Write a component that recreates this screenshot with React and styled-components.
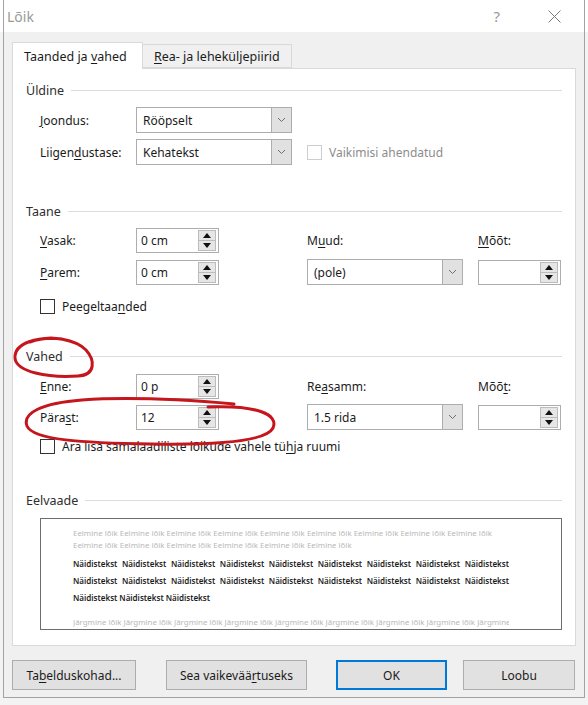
import React from "react";
import styled, { createGlobalStyle } from "styled-components";

const ui = `"Noto Sans", "Open Sans", Arial, sans-serif`;
const ink = "#1b1b1b";
const frame = "#adadad";
const face = "#e1e1e1";
const red = "#c4161c";

const GlobalStyle = createGlobalStyle`
  html, body { margin: 0; padding: 0; }
  body { font-family: ${ui}; background: #f4f4f4; }
  * { box-sizing: border-box; }
`;

const Page = styled.div`
  position: relative;
  width: 588px;
  height: 705px;
  overflow: hidden;
  padding: 0 3px;
  background: linear-gradient(#fff 0 32px, #f3f3f3 32px);
`;

const Dialog = styled.div`
  width: 582px;
  height: 698px;
  background: #f0f0f0;
  border: 1px solid #a3a3a3;
  border-top: none;
  display: flex;
  flex-direction: column;
`;

const TitleBar = styled.div`
  height: 32px;
  background: #fff;
  display: flex;
  align-items: center;
  padding-left: 3px;
`;

const Title = styled.span`
  flex: 1;
  font-size: 14px;
  color: #9a9a9a;
`;

const Help = styled.span`
  font-size: 15px;
  color: #9a9a9a;
  margin-right: 48px;
`;

const CloseIcon = styled.svg`
  width: 13px;
  height: 13px;
  margin-right: 23px;
`;

const Body = styled.div`
  padding: 10px 8px 0 8px;
`;

const TabStrip = styled.div`
  display: flex;
  align-items: flex-end;
  height: 26px;
`;

const Tab = styled.div`
  position: relative;
  z-index: 1;
  width: ${(p) => p.$w}px;
  height: ${(p) => (p.$active ? 27 : 24)}px;
  margin-bottom: ${(p) => (p.$active ? -1 : 0)}px;
  background: ${(p) => (p.$active ? "#fff" : "#f0f0f0")};
  border: 1px solid #d9d9d9;
  border-bottom: ${(p) => (p.$active ? "none" : "1px solid #d9d9d9")};
  border-left: ${(p) => (p.$active ? "1px solid #d9d9d9" : "none")};
  display: flex;
  align-items: center;
  padding-left: 11px;
  font-size: 12.5px;
  color: ${ink};
`;

const Panel = styled.div`
  width: 564px;
  height: 578px;
  background: #fff;
  border: 1px solid #d9d9d9;
  padding: 12px 13px 0 13px;
`;

const Legend = styled.div`
  display: flex;
  align-items: center;
  gap: 7px;
  height: 18px;
  margin-top: ${(p) => p.$mt || 0}px;
  font-size: 12.5px;
  color: #2e2e2e;

  &::after {
    content: "";
    flex: 1;
    height: 1px;
    background: #dddddd;
  }
`;

const Grid = styled.div`
  display: grid;
  grid-template-columns: 96px 83px 88px 156px 15px 83px;
  grid-template-rows: ${(p) => p.$rows};
  row-gap: ${(p) => p.$gap}px;
  margin: ${(p) => p.$mt}px 0 0 14px;
  align-items: center;
`;

const Cell = styled.div`
  grid-area: ${(p) => p.$row} / ${(p) => p.$col} / auto / span ${(p) => p.$span || 1};
  font-size: 12px;
  color: ${ink};
  display: flex;
  align-items: center;
  height: 100%;
`;

const Key = styled.span`
  text-decoration: underline;
  text-underline-offset: 2px;
`;

const SelectBox = styled.div`
  width: ${(p) => p.$w}px;
  height: 26px;
  border: 1px solid ${frame};
  background: #fff;
  display: flex;
  align-items: stretch;
  font-size: 12px;
  color: ${ink};
`;

const SelectValue = styled.span`
  flex: 1;
  display: flex;
  align-items: center;
  padding-left: 6px;
`;

const DropButton = styled.span`
  width: 20px;
  background: ${face};
  border-left: 1px solid ${frame};
  display: flex;
  align-items: center;
  justify-content: center;
`;

const SpinBox = styled.div`
  width: 83px;
  height: 25px;
  border: 1px solid ${frame};
  background: #fff;
  display: flex;
  align-items: stretch;
  font-size: 12px;
  color: ${ink};
  padding: 1px;
`;

const SpinValue = styled.span`
  flex: 1;
  display: flex;
  align-items: center;
  padding-left: 3px;
`;

const SpinButtons = styled.span`
  width: 18px;
  display: flex;
  flex-direction: column;
  margin-right: 1px;
`;

const SpinButton = styled.span`
  flex: 1;
  background: #e6e6e6;
  border: 1px solid #bcbcbc;
  margin-top: ${(p) => (p.$down ? -1 : 0)}px;
  display: flex;
  align-items: center;
  justify-content: center;
`;

const CheckRow = styled.label`
  display: flex;
  align-items: center;
  gap: 7px;
  font-size: 12px;
  color: ${(p) => (p.$disabled ? "#8c8c8c" : ink)};
  margin: ${(p) => p.$mt || 0}px 0 0 ${(p) => p.$ml || 0}px;
  height: 15px;
`;

const CheckBox = styled.span`
  width: 15px;
  height: 15px;
  border: 1px solid ${(p) => (p.$disabled ? "#cdcdcd" : "#333")};
  background: #fff;
`;

const Preview = styled.div`
  width: 522px;
  height: 112px;
  margin: 9px 0 0 14px;
  border: 1px solid #6d6d6d;
  padding: 8px 52px 0 32px;
  font-family: ${ui};
  overflow: hidden;
`;

const GhostLine = styled.div`
  font-size: 7.9px;
  line-height: 12px;
  color: #b8b8b8;
  white-space: nowrap;
  overflow: hidden;
  margin-top: ${(p) => p.$mt || 0}px;
`;

const SampleRow = styled.div`
  display: flex;
  justify-content: ${(p) => (p.$justify ? "space-between" : "flex-start")};
  gap: 2px;
  font-size: 8px;
  line-height: 17px;
  font-weight: 600;
  color: #1c1c1c;
  margin-top: ${(p) => p.$mt || 0}px;
`;

const ButtonRow = styled.div`
  display: flex;
  margin-top: 14px;
`;

const Button = styled.button`
  width: ${(p) => p.$w}px;
  height: 30px;
  margin-left: ${(p) => p.$ml || 0}px;
  background: ${face};
  border: ${(p) => (p.$primary ? "2px solid #0078d7" : `1px solid ${frame}`)};
  font-family: ${ui};
  font-size: 12px;
  color: ${ink};
  padding: 0;
`;

const Marks = styled.svg`
  position: absolute;
  left: 0;
  top: 0;
  width: 588px;
  height: 705px;
  pointer-events: none;
`;

const Chevron = () => (
  <svg width="9" height="6" viewBox="0 0 9 6">
    <path d="M1 1 L4.5 4.5 L8 1" fill="none" stroke="#6f6f6f" strokeWidth="1" />
  </svg>
);

const Select = ({ w, value }) => (
  <SelectBox $w={w}>
    <SelectValue>{value}</SelectValue>
    <DropButton>
      <Chevron />
    </DropButton>
  </SelectBox>
);

const Spin = ({ value }) => (
  <SpinBox>
    <SpinValue>{value}</SpinValue>
    <SpinButtons>
      <SpinButton>
        <svg width="8" height="5" viewBox="0 0 8 5">
          <path d="M0 5 L4 0 L8 5 Z" fill="#111" />
        </svg>
      </SpinButton>
      <SpinButton $down>
        <svg width="8" height="5" viewBox="0 0 8 5">
          <path d="M0 0 L4 5 L8 0 Z" fill="#111" />
        </svg>
      </SpinButton>
    </SpinButtons>
  </SpinBox>
);

const repeat = (s, n) => Array(n).fill(s).join(" ");
const samples = (n) => Array.from({ length: n }, (_, i) => <span key={i}>Näidistekst</span>);

const App = () => (
  <Page>
    <GlobalStyle />
    <Dialog>
      <TitleBar>
        <Title>Lõik</Title>
        <Help>?</Help>
        <CloseIcon viewBox="0 0 13 13">
          <path d="M0.5 0.5 L12.5 12.5 M12.5 0.5 L0.5 12.5" stroke="#7a7a7a" strokeWidth="1" />
        </CloseIcon>
      </TitleBar>

      <Body>
        <TabStrip>
          <Tab $active $w={131}>
            <span>
              Taanded ja <Key>v</Key>ahed
            </span>
          </Tab>
          <Tab $w={149}>
            <span>
              <Key>R</Key>ea- ja leheküljepiirid
            </span>
          </Tab>
        </TabStrip>

        <Panel>
          <Legend>Üldine</Legend>
          <Grid $rows="26px 26px" $gap={6} $mt={8}>
            <Cell $row={1} $col={1}>
              <span>
                <Key>J</Key>oondus:
              </span>
            </Cell>
            <Cell $row={1} $col={2} $span={3}>
              <Select w={156} value="Rööpselt" />
            </Cell>
            <Cell $row={2} $col={1}>
              <span>
                Liigen<Key>d</Key>ustase:
              </span>
            </Cell>
            <Cell $row={2} $col={2} $span={3}>
              <Select w={156} value="Kehatekst" />
            </Cell>
            <Cell $row={2} $col={4} $span={3}>
              <CheckRow $disabled>
                <CheckBox $disabled />
                <span>Vaikimisi ahendatud</span>
              </CheckRow>
            </Cell>
          </Grid>

          <Legend $mt={37}>Taane</Legend>
          <Grid $rows="25px 26px" $gap={6} $mt={8}>
            <Cell $row={1} $col={1}>
              <span>
                <Key>V</Key>asak:
              </span>
            </Cell>
            <Cell $row={1} $col={2}>
              <Spin value="0 cm" />
            </Cell>
            <Cell $row={1} $col={4}>
              <span>
                M<Key>u</Key>ud:
              </span>
            </Cell>
            <Cell $row={1} $col={6}>
              <span>
                <Key>M</Key>õõt:
              </span>
            </Cell>
            <Cell $row={2} $col={1}>
              <span>
                <Key>P</Key>arem:
              </span>
            </Cell>
            <Cell $row={2} $col={2}>
              <Spin value="0 cm" />
            </Cell>
            <Cell $row={2} $col={4}>
              <Select w={156} value="(pole)" />
            </Cell>
            <Cell $row={2} $col={6}>
              <Spin value="" />
            </Cell>
          </Grid>
          <CheckRow $mt={14} $ml={14}>
            <CheckBox />
            <span>
              Peegeltaa<Key>n</Key>ded
            </span>
          </CheckRow>

          <Legend $mt={33}>Vahed</Legend>
          <Grid $rows="25px 26px" $gap={5} $mt={9}>
            <Cell $row={1} $col={1}>
              <span>
                <Key>E</Key>nne:
              </span>
            </Cell>
            <Cell $row={1} $col={2}>
              <Spin value="0 p" />
            </Cell>
            <Cell $row={1} $col={4}>
              <span>
                Re<Key>a</Key>samm:
              </span>
            </Cell>
            <Cell $row={1} $col={6}>
              <span>
                Mõõ<Key>t</Key>:
              </span>
            </Cell>
            <Cell $row={2} $col={1}>
              <span>
                Pära<Key>s</Key>t:
              </span>
            </Cell>
            <Cell $row={2} $col={2}>
              <Spin value="12" />
            </Cell>
            <Cell $row={2} $col={4}>
              <Select w={156} value="1.5 rida" />
            </Cell>
            <Cell $row={2} $col={6}>
              <Spin value="" />
            </Cell>
          </Grid>
          <CheckRow $mt={9} $ml={14}>
            <CheckBox />
            <span>
              Ära lisa samalaadiliste lõikude vahele tü<Key>h</Key>ja ruumi
            </span>
          </CheckRow>

          <Legend $mt={37}>Eelvaade</Legend>
          <Preview>
            <GhostLine>{repeat("Eelmine lõik", 9)}</GhostLine>
            <GhostLine>{repeat("Eelmine lõik", 6)}</GhostLine>
            <SampleRow $justify $mt={4}>{samples(9)}</SampleRow>
            <SampleRow $justify>{samples(9)}</SampleRow>
            <SampleRow>{samples(3)}</SampleRow>
            <GhostLine $mt={10}>{repeat("Järgmine lõik", 8)} Järgmine</GhostLine>
          </Preview>
        </Panel>

        <ButtonRow>
          <Button $w={124}>
            Ta<Key>b</Key>elduskohad...
          </Button>
          <Button $w={141} $ml={30}>
            Sea vaikevää<Key>r</Key>tuseks
          </Button>
          <Button $w={111} $ml={29} $primary>
            OK
          </Button>
          <Button $w={112} $ml={16}>
            Loobu
          </Button>
        </ButtonRow>
      </Body>
    </Dialog>

    <Marks viewBox="0 0 588 705">
      <path
        d="M62 339 C38 336 14 343 15 358 C16 372 48 378 78 376 C96 375 95 360 86 350 C76 340 52 334 30 342"
        fill="none"
        stroke={red}
        strokeWidth="3"
        strokeLinecap="round"
      />
      <path
        d="M234 404 C200 401 140 396 82 400 C42 403 22 413 27 426 C33 440 82 443 152 444 C212 445 266 442 273 428 C279 414 256 405 208 407"
        fill="none"
        stroke={red}
        strokeWidth="3"
        strokeLinecap="round"
      />
    </Marks>
  </Page>
);

export default App;
